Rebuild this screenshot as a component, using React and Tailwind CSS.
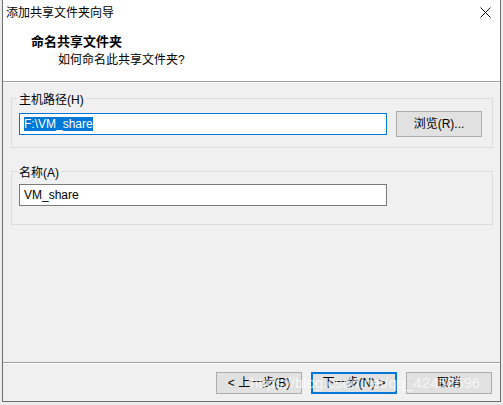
import React from 'react';

const font = "font-['Liberation_Sans','Noto_Sans_CJK_SC',sans-serif]";

const WinButton = ({ children, primary }) => (
  <div
    className={`w-[86px] h-[22px] flex items-center justify-center bg-[#e1e1e1] text-[12px] text-black ${
      primary ? 'border-2 border-[#0078d7]' : 'border border-[#adadad]'
    }`}
  >
    {children}
  </div>
);

const GroupBox = ({ label, children, className = '' }) => (
  <fieldset className={`ml-[8px] w-[482px] border border-[#dcdcdc] ${className}`}>
    <legend className="ml-[5px] px-[2px] pt-[4px] text-[12px] leading-[16px] text-black">{label}</legend>
    <div className="pl-[7px]">{children}</div>
  </fieldset>
);

export default function App() {
  return (
    <div className={`relative w-[503px] h-[405px] overflow-hidden bg-[#ececec] ${font}`}>
      {/* dialog window */}
      <div className="ml-[2px] w-[499px] h-[402px] flex flex-col bg-[#f0f0f0] border-l border-r border-b border-[#6e6e6e]">
        {/* title bar */}
        <div className="h-[26px] shrink-0 bg-white flex items-center justify-between pl-[3px] pr-[9px]">
          <span className="text-[12px] leading-[16px] text-black">添加共享文件夹向导</span>
          <svg width="11" height="11" viewBox="0 0 11 11" className="mb-[1px]">
            <path d="M0.5 0.5 L10.5 10.5 M10.5 0.5 L0.5 10.5" stroke="#111" strokeWidth="1" fill="none" />
          </svg>
        </div>

        {/* header */}
        <div className="h-[56px] shrink-0 bg-white border-b border-[#a0a0a0] pt-[8px] pl-[28px]">
          <div className="text-[13px] leading-[16px] font-bold text-black">命名共享文件夹</div>
          <div className="mt-[2px] pl-[27px] text-[12px] leading-[16px] text-black">如何命名此共享文件夹?</div>
        </div>
        <div className="h-px shrink-0 bg-white" />

        {/* body */}
        <div className="flex-1 pt-[5px]">
          <GroupBox label="主机路径(H)" className="pb-[10px]">
            <div className="pt-[3px] flex items-center gap-[9px]">
              <div className="w-[368px] h-[22px] bg-white border border-[#0078d7] pl-[4px] flex items-center text-[12px]">
                <span className="bg-[#0078d7] text-white leading-[14px]">F:\VM_share</span>
              </div>
              <div className="w-[86px] h-[26px] flex items-center justify-center bg-[#e1e1e1] border border-[#adadad] text-[12px] text-black">
                浏览(R)...
              </div>
            </div>
          </GroupBox>

          <GroupBox label="名称(A)" className="mt-[13px] pb-[18px]">
            <div className="pt-[3px]">
              <div className="w-[368px] h-[22px] bg-white border border-[#7a7a7a] pl-[4px] flex items-center text-[12px] text-black">
                VM_share
              </div>
            </div>
          </GroupBox>
        </div>

        {/* footer */}
        <div className="shrink-0 border-t border-[#a0a0a0]">
          <div className="h-px bg-white" />
          <div className="pt-[8px] pb-[7px] pr-[8px] flex justify-end gap-[9px]">
            <WinButton>&lt; 上一步(B)</WinButton>
            <WinButton primary>下一步(N) &gt;</WinButton>
            <WinButton>取消</WinButton>
          </div>
        </div>
      </div>

      {/* blog watermark */}
      <div className="absolute left-[250px] top-[374px] text-[15px] leading-[18px] text-white/70 whitespace-nowrap pointer-events-none">
        https://blog.csdn.net/qq_42452596
      </div>
    </div>
  );
}
